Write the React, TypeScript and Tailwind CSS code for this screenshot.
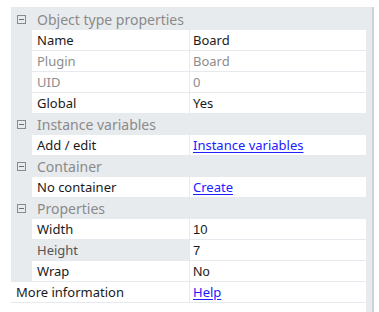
import React from "react";

type Row = {
  label: string;
  value: string;
  dim?: boolean;
  link?: boolean;
  arial?: boolean;
  hover?: boolean;
};

type Section = { title: string; rows: Row[] };

const sections: Section[] = [
  {
    title: "Object type properties",
    rows: [
      { label: "Name", value: "Board" },
      { label: "Plugin", value: "Board", dim: true },
      { label: "UID", value: "0", dim: true },
      { label: "Global", value: "Yes" },
    ],
  },
  {
    title: "Instance variables",
    rows: [{ label: "Add / edit", value: "Instance variables", link: true }],
  },
  {
    title: "Container",
    rows: [{ label: "No container", value: "Create", link: true }],
  },
  {
    title: "Properties",
    rows: [
      { label: "Width", value: "10", arial: true },
      { label: "Height", value: "7", arial: true, hover: true },
      { label: "Wrap", value: "No", arial: true },
    ],
  },
];

function CollapseIcon() {
  return (
    <svg width="9" height="9" viewBox="0 0 9 9" className="shrink-0">
      <rect x="0.5" y="0.5" width="8" height="8" fill="none" stroke="#8a8a8a" />
      <line x1="2" y1="4.5" x2="7" y2="4.5" stroke="#6e6e6e" />
    </svg>
  );
}

function Value({ row }: { row: Row }) {
  if (row.link) {
    return <span className="text-[#2020ff] underline underline-offset-2">{row.value}</span>;
  }
  return (
    <span
      className={row.dim ? "text-[#8c8c8c]" : "text-[#1a1a1a]"}
      style={row.arial ? { fontFamily: '"Liberation Sans", Arial, sans-serif' } : undefined}
    >
      {row.value}
    </span>
  );
}

export default function App() {
  return (
    <div
      className="w-[379px] h-[312px] bg-white pt-[7px] pl-[11px] text-[13px] leading-none overflow-hidden"
      style={{ fontFamily: '"Noto Sans", "Open Sans", sans-serif' }}
    >
      <div className="flex w-[363px] h-[305px]">
        <div className="w-[355px] flex flex-col">
          {sections.map((s, i) => (
            <div key={s.title}>
              <div
                className={`flex items-center gap-[11px] pl-[6px] bg-[#e8ebee] text-[#8a8a8a] text-[14px] ${
                  i === 0 ? "h-[23px] pt-[2px]" : "h-[21px]"
                }`}
              >
                <CollapseIcon />
                <span>{s.title}</span>
              </div>
              {s.rows.map((r) => (
                <div key={r.label} className="flex h-[21px] bg-[#e8ebee]">
                  <div className="w-[21px]" />
                  <div className="flex flex-1 border-b border-[#e6eaef] bg-white">
                    <div
                      className={`w-[158px] flex items-center pl-[5px] border-r border-[#e6eaef] ${
                        r.hover ? "bg-[#e8ebee] text-[#555]" : ""
                      } ${r.dim ? "text-[#8c8c8c]" : r.hover ? "" : "text-[#1a1a1a]"}`}
                    >
                      {r.label}
                    </div>
                    <div className="flex-1 flex items-center pl-[3px]">
                      <Value row={r} />
                    </div>
                  </div>
                </div>
              ))}
            </div>
          ))}
          <div className="flex h-[21px] border-b border-[#e6eaef] bg-white">
            <div className="w-[179px] flex items-center pl-[5px] border-r border-[#e6eaef] text-[#1a1a1a]">
              More information
            </div>
            <div className="flex-1 flex items-center pl-[3px]">
              <span className="text-[#2020ff] underline underline-offset-2">Help</span>
            </div>
          </div>
        </div>
        <div className="w-[6px] bg-[#e8ebee]" />
        <div className="w-[2px] bg-[#cfd3d8]" />
      </div>
    </div>
  );
}
